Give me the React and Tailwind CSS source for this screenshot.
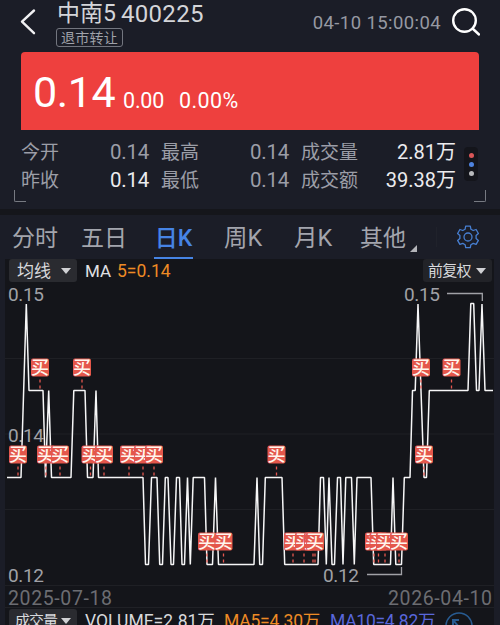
const FONT = "font-['Roboto','Noto_Sans_CJK_SC',sans-serif]";

const LINE = [
  [7, 477.5], [21, 477.5], [26.3, 304], [29, 390.5], [43, 390.5], [45.5, 477.5], [48.7, 390.5], [51.5, 477.5], [71, 477.5],
  [73.8, 390.5], [85, 390.5], [87.5, 477.5], [93, 477.5], [96, 390.5], [98.5, 477.5], [143, 477.5],
  [145.5, 564.5], [148.5, 564.5], [151.5, 477.5], [157, 477.5], [159.7, 564.5], [162.5, 564.5], [165.3, 477.5], [168, 477.5],
  [171, 564.5], [173.5, 564.5], [176.5, 477.5], [179.5, 477.5], [182, 564.5], [184.5, 564.5], [187.5, 477.5], [190.3, 564.5],
  [193.2, 477.5], [204.5, 477.5], [207, 564.5], [212.5, 564.5], [215.5, 477.5], [218.5, 564.5], [254, 564.5],
  [257, 477.5], [259.7, 564.5], [262.5, 564.5], [265.3, 477.5], [282, 477.5], [284.7, 564.5], [318, 564.5],
  [320.5, 477.5], [323.5, 477.5], [326.3, 564.5], [329, 477.5], [332, 564.5], [334.5, 564.5], [337.5, 477.5], [340.5, 477.5],
  [343, 564.5], [345.8, 477.5], [351.5, 477.5], [354.3, 564.5], [357, 477.5], [371, 477.5], [373.7, 564.5], [390.5, 564.5],
  [393, 477.5], [395.8, 564.5], [401.5, 564.5], [404.3, 477.5], [410, 477.5], [412.5, 390.5], [415.2, 390.5], [418, 304],
  [424, 477.5], [426.5, 477.5], [429.3, 390.5], [468, 390.5], [470.8, 303.5], [473.7, 303.5], [476.5, 390.5], [479, 390.5],
  [482, 304], [485, 390.5], [493, 390.5],
];

const MARKS = [
  [40, 367.5], [82, 367.5], [421, 367.5], [451.5, 367.5],
  [18, 454.5], [46, 454.5], [60, 454.5], [90.5, 454.5], [104, 454.5], [129, 454.5], [143, 454.5], [154, 454.5], [276.5, 454.5], [424, 454.5],
  [207, 541.5], [223.5, 541.5], [293, 541.5], [304, 541.5], [313, 541.5], [315, 541.5],
  [374, 541.5], [378.5, 541.5], [385, 541.5], [399, 541.5],
];

function Label({ x, y, w, children, fill = "#a0a1a6", size = 19 }) {
  return (
    <text x={x} y={y} textLength={w} fill={fill} fontSize={size}>
      {children}
    </text>
  );
}

function Chart() {
  return (
    <svg className="block h-[322px] w-[500px] shrink-0 overflow-visible" viewBox="0 285 500 322">
      <g stroke="#1f2025" strokeWidth="1">
        <path d="M5 358.5H494M5 434H494M5 509.5H494M5 585.5H494" />
      </g>
      <Label x="8" y="441.5" w="36">0.14</Label>
      <polyline points={LINE.map((p) => p.join(",")).join(" ")} fill="none" stroke="#f6f6f7" strokeWidth="1.5" strokeLinejoin="bevel" />
      {MARKS.map(([x, y]) => (
        <g key={`${x}-${y}`}>
          <path d={`M${x} ${y + 12}V${y + 22}`} stroke="#e5574f" strokeWidth="1.3" strokeDasharray="3 3" />
          <rect x={x - 9} y={y - 9} width="18" height="18" rx="2" fill="#e4574b" />
          <text x={x} y={y + 6.5} textAnchor="middle" fontSize="18" fontWeight="500" fill="#fff6ee">买</text>
        </g>
      ))}
      <Label x="8" y="300.5" w="36">0.15</Label>
      <Label x="404" y="300.5" w="36">0.15</Label>
      <Label x="8" y="582" w="36">0.12</Label>
      <Label x="323" y="582" w="36">0.12</Label>
      <path d="M447 293.5H482.3V301M367 574.5H401.5V567" fill="none" stroke="#a0a1a6" strokeWidth="1.3" />
      <Label x="8" y="604.5" w="104" size={19.5} fill="#6c6d72">2025-07-18</Label>
      <Label x="388" y="604.5" w="104" size={19.5} fill="#6c6d72">2026-04-10</Label>
    </svg>
  );
}

function T({ className, children }) {
  return <span className={`block shrink-0 whitespace-nowrap ${className}`}>{children}</span>;
}

function Caret() {
  return <span className="h-0 w-0 border-x-[5.5px] border-t-[6px] border-x-transparent border-t-[#d0d1d4]" />;
}

function Corner({ flip }) {
  return <span className={`h-3 w-3 border-b border-[#777a82] ${flip ? "rounded-br-[2px] border-r" : "rounded-bl-[2px] border-l"}`} />;
}

function Gear() {
  return (
    <svg width="24" height="24" viewBox="0 0 24 24" fill="none" stroke="#477fd2" strokeWidth="1.3" strokeLinejoin="round">
      <path d="M9.7 1.2h4.6l.6 3 2.300 1.300 2.900-1 2.300 4-2.300 2v2.900l2.300 2-2.300 4-2.900-1-2.300 1.300-.6 3H9.700l-.6-3-2.300-1.300-2.900 1-2.300-4 2.300-2v-2.900l-2.300-2 2.300-4 2.900 1 2.300-1.300z" />
      <circle cx="12" cy="12" r="4" />
    </svg>
  );
}

const STATS = [
  ["今开", "0.14", "最高", "0.14", "成交量", "2.81万"],
  ["昨收", "0.14", "最低", "0.14", "成交额", "39.38万"],
];

const NUM = "w-[39px] text-[20.5px] tracking-[-0.2px]";
const TAB = "text-[23px] leading-[47px]";

export default function App() {
  return (
    <div className={`flex h-[625px] w-[500px] flex-col overflow-hidden bg-[#1b1d27] ${FONT}`}>
      <header className="flex h-[52px] shrink-0 items-start px-5">
        <svg className="mt-2 h-7 w-4 shrink-0" viewBox="0 0 16 28" fill="none" stroke="#f0f0f2" strokeWidth="2.4" strokeLinecap="round" strokeLinejoin="round">
          <path d="M14 2.500 2 13.700l12 11.500" />
        </svg>
        <div className="ml-5 flex flex-col">
          <div className="flex h-7 gap-1 pl-px text-[#d4d5d9]">
            <T className="w-[60px] text-[23px] leading-7">中南5</T>
            <T className="text-[24px] leading-7 tracking-[0.3px]">400225</T>
          </div>
          <div className="flex h-[19px] w-[67px] items-center justify-center rounded-[3px] border border-[#73767f] text-[#a0a2aa]">
            <T className="text-[14px] leading-[18px] tracking-[0.3px]">退市转让</T>
          </div>
        </div>
        <T className="ml-auto mt-[9px] text-[18.5px] leading-7 tracking-[0.4px] text-[#9699a2]">04-10 15:00:04</T>
        <svg className="ml-[11px] mt-2 h-7 w-7 shrink-0" viewBox="0 0 28 28" fill="none" stroke="#fff" strokeWidth="2.400" strokeLinecap="round">
          <circle cx="12.500" cy="12.500" r="11.300" />
          <path d="M20.500 20.500 27 26.500" />
        </svg>
      </header>
      <section className="mx-[21px] flex h-[78px] shrink-0 items-start rounded-t-[4px] bg-[#ee403e] pl-3 text-white">
        <T className="w-[82px] text-[43px] leading-[81px] tracking-[-0.4px]">0.14</T>
        <T className="ml-2 w-[41px] text-[21.5px] leading-[97px] tracking-[-0.2px]">0.00</T>
        <T className="ml-[15px] text-[21.5px] leading-[97px] tracking-[0.4px]">0.00%</T>
      </section>
      <section className="flex h-[79px] shrink-0 flex-col pt-2">
        <div className="flex pl-[21px]">
          <div className="flex w-[435px] flex-col">
            {STATS.map((s, i) => (
              <div key={s[0]} className="flex h-7 items-center text-[19px] leading-[29px] text-[#9c9ea7]">
                <T className="w-[38px]">{s[0]}</T>
                <T className={`ml-[51px] ${NUM} ${i ? "text-[#ececef]" : ""}`}>{s[1]}</T>
                <T className="ml-3 w-[38px]">{s[2]}</T>
                <T className={`ml-[51px] ${NUM}`}>{s[3]}</T>
                <T className="ml-3">{s[4]}</T>
                <T className="ml-auto text-[20px] text-[#ececef]">{s[5]}</T>
              </div>
            ))}
          </div>
          <div className="ml-2 mt-[9px] flex h-[34px] w-[14px] flex-col items-center justify-center gap-1 rounded-sm bg-[#14151b]">
            <span className="h-[5px] w-[5px] rounded-full bg-[#d95658]" />
            <span className="h-[5px] w-[5px] rounded-full bg-[#4e83df]" />
            <span className="h-[5px] w-[5px] rounded-full bg-[#b8b9bc]" />
          </div>
        </div>
        <div className="-mt-[4px] flex justify-between px-[14px]">
          <Corner />
          <Corner flip />
        </div>
      </section>
      <div className="h-[6px] shrink-0 bg-[#15161b]" />
      <nav className="flex h-[44px] shrink-0 items-start pl-3 text-[#a3a5ad]">
        <T className={`w-[46px] ${TAB}`}>分时</T>
        <T className={`ml-[23px] w-[46px] ${TAB}`}>五日</T>
        <div className="ml-[27px] flex h-[44px] w-[39px] flex-col items-center justify-between text-[#4684e5]">
          <T className="-mb-[5px] text-[23px] font-medium leading-[47px]">日K</T>
          <span className="h-[2px] w-full bg-[#4684e5]" />
        </div>
        <T className="ml-[31px] w-[39px] text-[23.5px] leading-[47px]">周K</T>
        <T className="ml-[31px] w-[39px] text-[23.5px] leading-[47px]">月K</T>
        <T className={`ml-[27px] w-[46px] ${TAB}`}>其他</T>
        <svg className="ml-[4px] mt-[30px] h-[7px] w-[7px] shrink-0" viewBox="0 0 7 7"><path d="M7 0v7H0z" fill="#b4b5ba" /></svg>
        <span className="ml-[19px] mt-3 h-5 w-px bg-[#20222b]" />
        <div className="ml-[19px] mt-[10px]"><Gear /></div>
      </nav>
      <main className="flex h-[366px] shrink-0 flex-col border-l-[5px] border-r-[6px] border-[#1b1d27] bg-[#14151a]">
        <div className="flex h-[26px] shrink-0 items-start pl-1">
          <div className="flex h-[23px] w-[68px] items-center justify-between rounded-[3px] bg-[#2a2b30] pl-2 pr-[6px] text-[#d8d9dc]">
            <T className="text-[17px] leading-6">均线</T><Caret />
          </div>
          <T className="ml-2 w-[26px] text-[17px] leading-[25px] text-[#e0e0e3]">MA</T>
          <T className="ml-[6px] text-[17.5px] leading-[25px] text-[#ee8b25]">5=0.14</T>
          <div className="ml-auto mr-[2px] flex h-[23px] w-[69px] items-center justify-between rounded-[3px] bg-[#222328] pl-[5px] pr-[6px] text-[#d8d9dc]">
            <T className="text-[15px] leading-6 tracking-[-0.8px]">前复权</T><Caret />
          </div>
        </div>
        <div className="-ml-[5px]"><Chart /></div>
        <div className="flex h-[18px] shrink-0 items-start overflow-hidden border-t border-[#202126] pl-1">
          <div className="mt-px flex h-[24px] w-[68px] shrink-0 items-center justify-between rounded-[3px] bg-[#2a2b30] pl-[6px] pr-[6px] text-[#d8d9dc]">
            <T className="text-[15px] leading-6 tracking-[-1px]">成交量</T><Caret />
          </div>
          <T className="ml-2 w-[130px] text-[17.5px] leading-[26px] text-[#d8d9dc]">VOLUME=2.81万</T>
          <T className="ml-[9px] w-[96px] text-[17.5px] leading-[26px] tracking-[-0.2px] text-[#ee8b25]">MA5=4.30万</T>
          <T className="ml-[10px] w-[105px] text-[17.5px] leading-[26px] tracking-[-0.25px] text-[#5967dc]">MA10=4.82万</T>
          <svg className="ml-[10px] mt-1 h-7 w-7 shrink-0" viewBox="0 0 28 28" fill="none" stroke="#285b91" strokeWidth="1.500">
            <circle cx="14" cy="14" r="13" />
            <path d="M8 14V8h6M9 9l4 5" strokeWidth="2" />
          </svg>
        </div>
      </main>
    </div>
  );
}
